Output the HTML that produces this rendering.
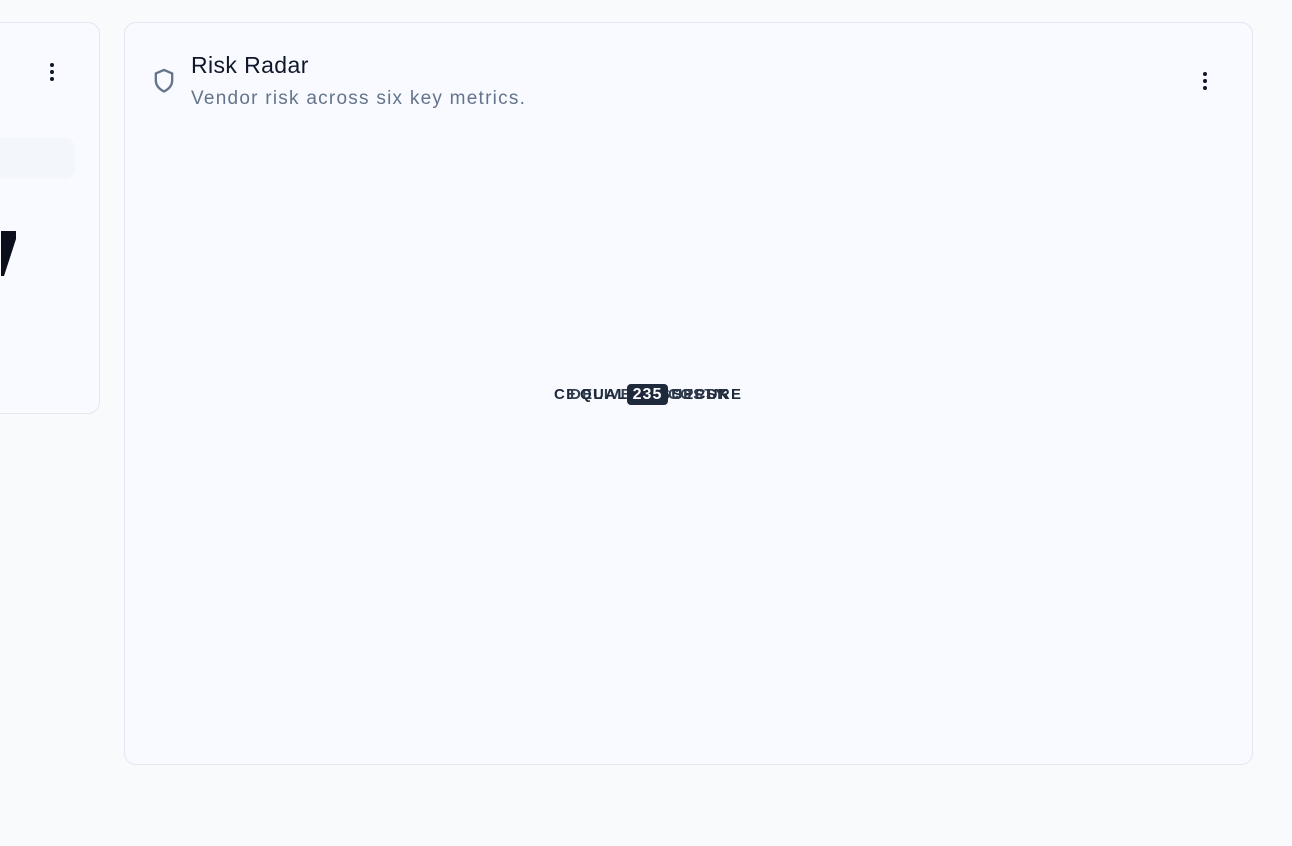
<!DOCTYPE html>
<html><head><meta charset="utf-8"><style>
html,body{margin:0;padding:0;background:#f8fafc;width:1292px;height:846px;overflow:hidden;font-family:"Liberation Sans",sans-serif;position:relative}
.card{position:absolute;background:#f8faff;border:1px solid #e2e8f0;border-radius:12px;box-sizing:border-box}
.dots{position:absolute;width:4px}
.dots i{display:block;width:4px;height:4px;border-radius:50%;background:#0f172a;margin-bottom:3px}
.lbl{position:absolute;top:386px;font-size:15px;font-weight:bold;color:#1e293b;letter-spacing:1.3px;white-space:nowrap}
</style></head><body>
<div class="card" style="left:-20px;top:22px;width:120px;height:392px">
  <div class="dots" style="left:69px;top:40px"><i></i><i></i><i></i></div>
  <div style="position:absolute;left:0;top:115px;width:94px;height:41px;background:#f1f5f9;border-radius:10px;opacity:.7"></div>
  <svg style="position:absolute;left:20px;top:208px" width="20" height="45"><polygon points="0,0 15,0 15,8 3,45 0,45" fill="#0b0f1c"/></svg>
</div>
<div class="card" style="left:124px;top:22px;width:1129px;height:743px">
  <svg style="position:absolute;left:25px;top:43px" width="28" height="30" viewBox="0 0 24 24" fill="none" stroke="#64748b" stroke-width="2" stroke-linejoin="round"><path d="M12 2.5 5 5.5v6c0 4.5 3 7.5 7 9.5 4-2 7-5 7-9.5v-6z"/></svg>
  <div style="position:absolute;left:66px;top:29px;font-size:23px;color:#0f172a;letter-spacing:0.4px">Risk Radar</div>
  <div style="position:absolute;left:66px;top:65px;font-size:19px;color:#64748b;letter-spacing:1.25px">Vendor risk across six key metrics.</div>
  <div class="dots" style="left:1078px;top:49px"><i></i><i></i><i></i></div>
</div>
<div class="lbl" style="left:554px">CE</div>
<div class="lbl" style="left:706px">SK</div>
<div class="lbl" style="left:570px;color:#334155">DELIVERY</div>
<div class="lbl" style="left:580px;color:#1e293b">QUALITY</div>
<div class="lbl" style="left:668px;color:#334155">COST</div>
<div class="lbl" style="left:672px;color:#1e293b">SECURE</div>
<div class="lbl" style="left:660px;color:#2d3748">SUPPLY</div>
<div style="position:absolute;left:627px;top:384px;width:41px;height:21px;background:#1e293b;border-radius:4px;color:#fff;font-size:16px;font-weight:bold;text-align:center;line-height:21px;letter-spacing:1px">235</div>
</body></html>
